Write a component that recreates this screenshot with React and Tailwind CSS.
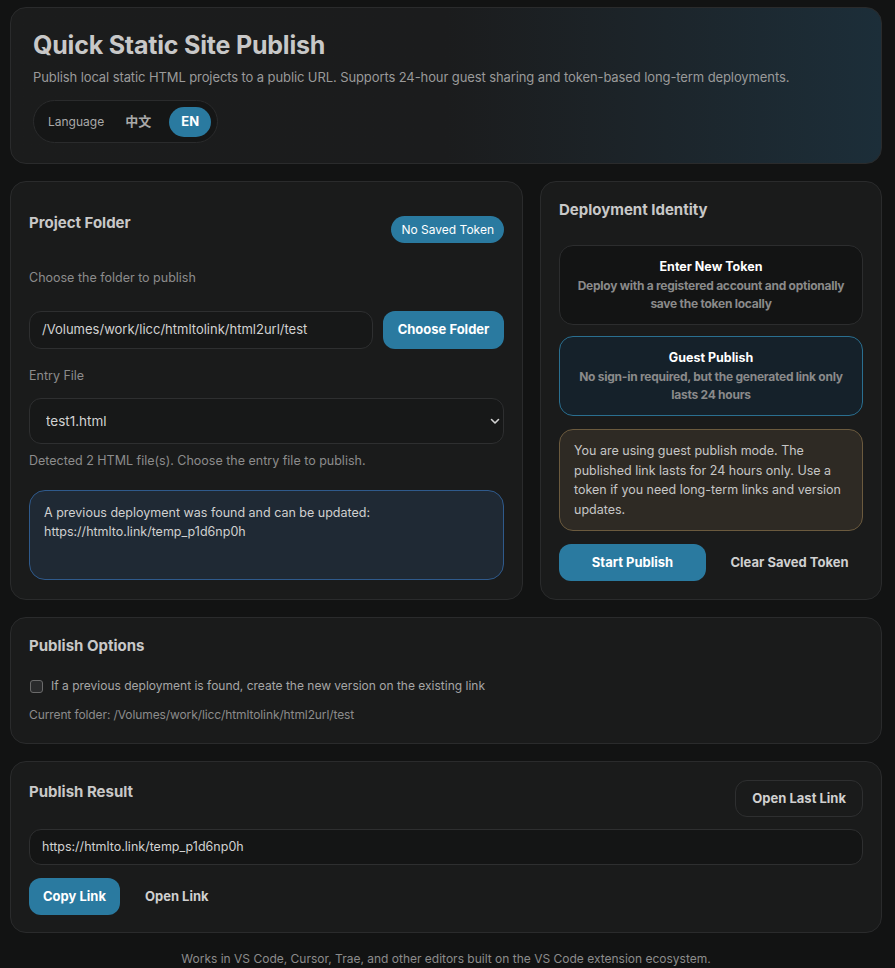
import { useState } from "react";

const font = { fontFamily: "Inter, 'Noto Sans CJK SC', sans-serif" };

function Card({ className = "", children }) {
  return (
    <section className={`rounded-[16px] border border-[#2a2b2c] bg-[#1a1b1b] ${className}`}>
      {children}
    </section>
  );
}

function App() {
  const [lang, setLang] = useState("en");
  const [reuse, setReuse] = useState(false);
  const folder = "/Volumes/work/licc/htmltolink/html2url/test";
  const link = "https://htmlto.link/temp_p1d6np0h";

  return (
    <div
      className="min-h-screen bg-[#121313] pt-[7px] pb-[20px] pl-[10px] pr-[13px] text-[#c9c9c9] font-['Inter','Noto_Sans_CJK_SC',sans-serif]"
      style={font}
    >
      <div className="flex flex-col gap-[17px]">
        <header className="rounded-[16px] border border-[#2a2b2c] bg-gradient-to-r from-[#1b1c1c] via-[#1b1c1d] to-[#1c2e39] px-[22px] pt-[22px] pb-[20px]">
          <h1 className="text-[25px] font-bold leading-[30px] tracking-[-0.2px] text-[#c8c8c8]">Quick Static Site Publish</h1>
          <p className="mt-[9px] text-[13px] leading-[16px] tracking-[-0.1px] text-[#9a9a9a]">
            Publish local static HTML projects to a public URL. Supports 24-hour guest sharing and token-based long-term deployments.
          </p>
          <div className="mt-[15px] inline-flex h-[43px] items-center rounded-full border border-[#2a2b2c] bg-[#151616] pl-[14px] pr-[6px]">
            <span className="text-[12px] text-[#a9a9a9]">Language</span>
            <button
              className={`ml-[3px] h-[30px] rounded-full px-[18px] text-[13px] font-bold ${lang === "zh" ? "bg-[#2a7aa0] text-white" : "text-[#a9a9a9]"}`}
              onClick={() => setLang("zh")}
              type="button"
            >
              中文
            </button>
            <button
              className={`h-[30px] w-[42px] rounded-full text-[13px] font-bold ${lang === "en" ? "bg-[#2a7aa0] text-white" : "text-[#a9a9a9]"}`}
              onClick={() => setLang("en")}
              type="button"
            >
              EN
            </button>
          </div>
        </header>

        <div className="grid grid-cols-[1.5fr_1fr] gap-[17px]">
          <Card className="px-[18px] pt-[18px] pb-[18px]">
            <div className="flex items-start justify-between">
              <h2 className="mt-[13px] text-[15px] font-bold leading-[20px] text-[#c8c8c8]">Project Folder</h2>
              <span className="mt-[16px] rounded-full bg-[#2a7aa0] px-[10px] py-[5px] text-[12px] leading-[17px] text-white">No Saved Token</span>
            </div>
            <p className="mt-[27px] text-[12.5px] leading-[16px] text-[#8c8c8c]">Choose the folder to publish</p>
            <div className="mt-[25px] flex gap-[10px]">
              <div className="flex h-[38px] flex-1 items-center rounded-[12px] border border-[#2e2f30] bg-[#171818] px-[12px] text-[13px] text-[#d2d2d2]">
                {folder}
              </div>
              <button className="h-[38px] w-[121px] rounded-[12px] bg-[#2a7aa0] text-[13px] font-bold text-white" type="button">
                Choose Folder
              </button>
            </div>
            <p className="mt-[19px] text-[12.5px] leading-[16px] text-[#8c8c8c]">Entry File</p>
            <div className="relative mt-[14px]">
              <select className="h-[46px] w-full appearance-none rounded-[12px] border border-[#2e2f30] bg-[#171818] px-[16px] text-[13.5px] text-[#d2d2d2] outline-none">
                <option>test1.html</option>
                <option>test2.html</option>
              </select>
              <svg className="pointer-events-none absolute right-[4px] top-[18px]" width="10" height="10" viewBox="0 0 10 10" fill="none">
                <path d="M1.5 3.5 5 7l3.5-3.5" stroke="#d2d2d2" strokeWidth="1.6" strokeLinecap="round" strokeLinejoin="round" />
              </svg>
            </div>
            <p className="mt-[9px] text-[12.5px] leading-[16px] text-[#8c8c8c]">Detected 2 HTML file(s). Choose the entry file to publish.</p>
            <div className="mt-[21px] h-[90px] rounded-[16px] border border-[#2f5a8c] bg-[#1f2934] px-[14px] py-[12px] text-[12.5px] leading-[19px] text-[#d0d0d0]">
              A previous deployment was found and can be updated:
              <br />
              {link}
            </div>
          </Card>

          <Card className="px-[18px] pt-[18px] pb-[18px]">
            <h2 className="text-[15px] font-bold leading-[20px] text-[#c8c8c8]">Deployment Identity</h2>
            <div className="mt-[25px] flex flex-col gap-[11px]">
              <button className="h-[80px] rounded-[14px] border border-[#2c2d2e] bg-[#131414] px-[12px] text-center" type="button">
                <p className="text-[12.5px] font-bold leading-[17px] text-white">Enter New Token</p>
                <p className="mt-[2px] text-[12px] font-bold leading-[18px] tracking-[-0.25px] text-[#8a8a8a]">
                  Deploy with a registered account and optionally save the token locally
                </p>
              </button>
              <button className="h-[80px] rounded-[14px] border border-[#2a6f90] bg-[#15212a] px-[12px] text-center" type="button">
                <p className="text-[12.5px] font-bold leading-[17px] text-white">Guest Publish</p>
                <p className="mt-[2px] text-[12px] font-bold leading-[18px] tracking-[-0.25px] text-[#8a8a8a]">
                  No sign-in required, but the generated link only lasts 24 hours
                </p>
              </button>
            </div>
            <div className="mt-[13px] rounded-[14px] border border-[#6b5a3e] bg-[#2e2a24] px-[14px] py-[11px] text-[12.5px] leading-[19.5px] text-[#c6c6c6]">
              You are using guest publish mode. The published link lasts for 24 hours only. Use a token if you need long-term links and version updates.
            </div>
            <div className="mt-[13px] grid grid-cols-2 gap-[10px]">
              <button className="h-[37px] rounded-[12px] bg-[#2a7aa0] text-[13px] font-bold text-white" type="button">
                Start Publish
              </button>
              <button className="h-[37px] rounded-[12px] text-[13px] font-bold text-[#d0d0d0]" type="button">
                Clear Saved Token
              </button>
            </div>
          </Card>
        </div>

        <Card className="px-[18px] pt-[18px] pb-[20px]">
          <h2 className="text-[15px] font-bold leading-[20px] text-[#c8c8c8]">Publish Options</h2>
          <label className="mt-[22px] flex items-center gap-[8px] text-[12px] leading-[16px] text-[#a6a6a6]">
            <input
              checked={reuse}
              className="ml-[1px] h-[13px] w-[13px] appearance-none rounded-[3px] border border-[#6a6a6a] bg-[#2a2b2c] checked:bg-[#2a7aa0]"
              onChange={(event) => setReuse(event.target.checked)}
              type="checkbox"
            />
            If a previous deployment is found, create the new version on the existing link
          </label>
          <p className="mt-[13px] text-[12px] leading-[16px] tracking-[-0.1px] text-[#8c8c8c]">Current folder: {folder}</p>
        </Card>

        <Card className="px-[18px] pt-[18px] pb-[17px]">
          <div className="flex items-start justify-between">
            <h2 className="mt-[2px] text-[15px] font-bold leading-[20px] text-[#c8c8c8]">Publish Result</h2>
            <button className="h-[37px] rounded-[12px] border border-[#2e2f30] px-[16px] text-[13px] font-bold text-[#d0d0d0]" type="button">
              Open Last Link
            </button>
          </div>
          <div className="mt-[12px] flex h-[36px] items-center rounded-[12px] border border-[#2e2f30] bg-[#141515] px-[12px] text-[12.5px] text-[#d2d2d2]">
            {link}
          </div>
          <div className="mt-[13px] flex gap-[10px]">
            <button className="h-[37px] rounded-[12px] bg-[#2a7aa0] px-[14px] text-[13px] font-bold text-white" type="button">
              Copy Link
            </button>
            <button className="h-[37px] rounded-[12px] px-[15px] text-[13px] font-bold text-[#d0d0d0]" type="button">
              Open Link
            </button>
          </div>
        </Card>
      </div>

      <p className="mt-[18px] text-center text-[12px] leading-[16px] text-[#8c8c8c]">
        Works in VS Code, Cursor, Trae, and other editors built on the VS Code extension ecosystem.
      </p>
    </div>
  );
}

export default App;
